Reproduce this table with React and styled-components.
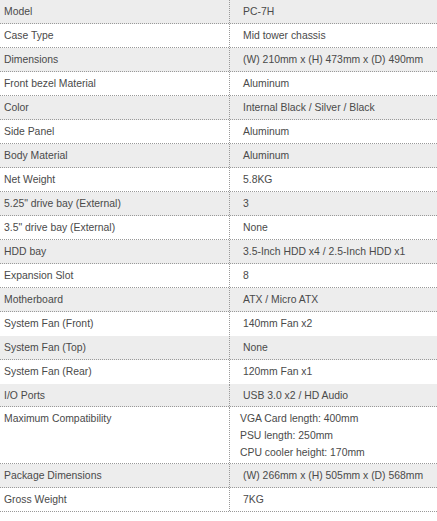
import React from 'react'
import styled, { createGlobalStyle } from 'styled-components'

const GlobalStyle = createGlobalStyle`
  html, body {
    margin: 0;
    padding: 0;
    background: #ffffff;
  }
  body {
    font-family: "Liberation Sans", Arial, sans-serif;
  }
`

const specs = [
  ['Model', ['PC-7H']],
  ['Case Type', ['Mid tower chassis']],
  ['Dimensions', ['(W) 210mm x (H) 473mm x (D) 490mm']],
  ['Front bezel Material', ['Aluminum']],
  ['Color', ['Internal Black / Silver / Black']],
  ['Side Panel', ['Aluminum']],
  ['Body Material', ['Aluminum']],
  ['Net Weight', ['5.8KG']],
  ['5.25" drive bay (External)', ['3']],
  ['3.5" drive bay (External)', ['None']],
  ['HDD bay', ['3.5-Inch HDD x4 / 2.5-Inch HDD x1']],
  ['Expansion Slot', ['8']],
  ['Motherboard', ['ATX / Micro ATX']],
  ['System Fan (Front)', ['140mm Fan x2'], { plain: true }],
  ['System Fan (Top)', ['None']],
  ['System Fan (Rear)', ['120mm Fan x1'], { plain: true }],
  ['I/O Ports', ['USB 3.0 x2 / HD Audio'], { tight: true }],
  [
    'Maximum Compatibility',
    ['VGA Card length: 400mm', 'PSU length: 250mm', 'CPU cooler height: 170mm'],
    { tight: true, list: true },
  ],
  ['Package Dimensions', ['(W) 266mm x (H) 505mm x (D) 568mm']],
  ['Gross Weight', ['7KG']],
]

const App = () => {
  return (
    <>
      <GlobalStyle />
      <SpecTable>
        {specs.map(([label, values, opts = {}], i) => (
          <Row key={label} $shade={i % 2 === 0} $plain={opts.plain}>
            <Label $tight={opts.tight}>{label}</Label>
            <Value $tight={opts.tight} $list={opts.list}>
              {values.map((v) => (
                <span key={v}>{v}</span>
              ))}
            </Value>
          </Row>
        ))}
      </SpecTable>
    </>
  )
}

export default App

const SpecTable = styled.div`
  width: 437px;
  display: flex;
  flex-direction: column;
  font-size: 10.4px;
  line-height: 17px;
  color: #4a4a4a;
`

const Row = styled.div`
  display: grid;
  grid-template-columns: 230px 1fr;
  background: ${(p) => (p.$shade ? '#ededed' : '#ffffff')};
  border-bottom: 1px dotted ${(p) => (p.$plain ? 'transparent' : '#999999')};
`

const Label = styled.div`
  padding: 3px 4px ${(p) => (p.$tight ? '2px' : '3px')};
  border-right: 1px dotted #999999;
  white-space: nowrap;
`

const Value = styled.div`
  display: flex;
  flex-direction: column;
  padding: 3px 4px ${(p) => (p.$tight ? '2px' : '3px')} ${(p) => (p.$list ? '10px' : '13px')};
  white-space: nowrap;
`
